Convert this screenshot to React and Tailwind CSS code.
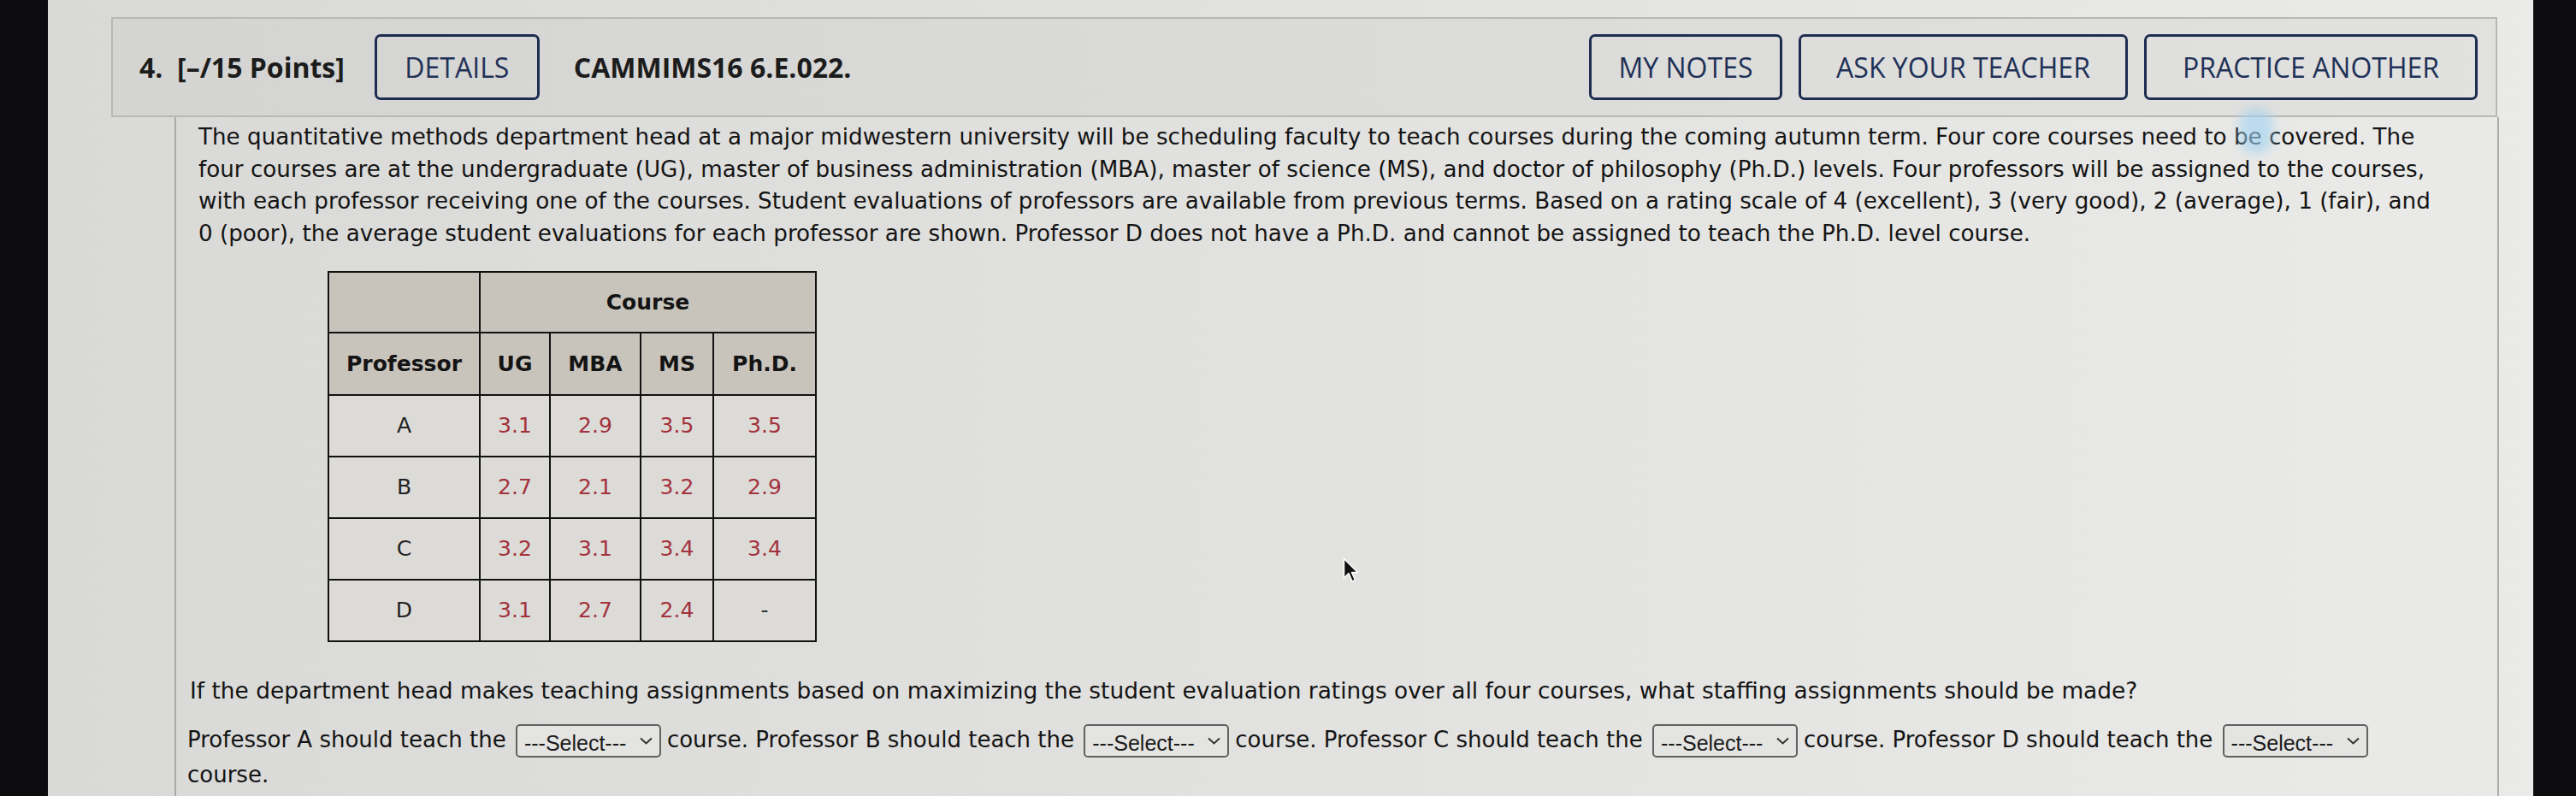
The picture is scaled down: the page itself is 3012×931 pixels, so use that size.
import React from "react";

const rows = [
  { prof: "A", vals: ["3.1", "2.9", "3.5", "3.5"] },
  { prof: "B", vals: ["2.7", "2.1", "3.2", "2.9"] },
  { prof: "C", vals: ["3.2", "3.1", "3.4", "3.4"] },
  { prof: "D", vals: ["3.1", "2.7", "2.4", "-"] },
];

function HeadButton({ label, width }) {
  return (
    <button
      className={`flex items-center justify-center h-[77px] ${width} border-[3px] border-[#1d2d4f] rounded-[7px] text-[32px] text-[#1f3157] font-['Open_Sans',sans-serif]`}
    >
      {label}
    </button>
  );
}

function Select() {
  return (
    <span className="relative inline-block align-middle ml-[3px] mr-[7px]">
      <select className="appearance-none block h-[39px] w-[170px] border-2 border-[#606060] rounded-[5px] bg-[#e4e4e2] pl-[8px] text-[25px] text-[#1a1a1a] font-['Liberation_Sans',Arial,sans-serif]">
        <option>---Select---</option>
      </select>
      <svg
        className="pointer-events-none absolute right-[9px] top-[14px]"
        width="17"
        height="11"
        viewBox="0 0 17 11"
      >
        <path d="M2 2.5l6.5 6 6.5-6" stroke="#333" strokeWidth="2" fill="none" />
      </svg>
    </span>
  );
}

export default function App() {
  return (
    <div className="relative flex w-[3012px] h-[931px] overflow-hidden bg-[#0c0c0e]">
      <div className="w-[56px] shrink-0" />

      <div className="flex flex-col w-[2906px] bg-linear-to-r from-[#d9d9d7] to-[#eaeae8]">
        {/* question header */}
        <div className="flex items-center justify-between mt-[20px] ml-[74px] w-[2790px] h-[117px] pl-[31px] pr-[21px] border-2 border-[#b8b8b6] bg-linear-to-r from-[#d4d4d2] to-[#e1e1df]">
          <div className="flex items-center">
            <span className="text-[32px] font-bold text-[#1c1c1c] font-['Open_Sans',sans-serif]">
              4.&nbsp; [–/15 Points]
            </span>
            <div className="ml-[35px]">
              <HeadButton label="DETAILS" width="w-[193px]" />
            </div>
            <span className="ml-[40px] text-[32px] font-bold text-[#1c1c1c] font-['Open_Sans',sans-serif]">
              CAMMIMS16 6.E.022.
            </span>
          </div>
          <div className="flex items-center gap-[19px]">
            <HeadButton label="MY NOTES" width="w-[226px]" />
            <HeadButton label="ASK YOUR TEACHER" width="w-[385px]" />
            <HeadButton label="PRACTICE ANOTHER" width="w-[390px]" />
          </div>
        </div>

        {/* question body */}
        <div className="flex-1 ml-[148px] w-[2718px] border-x-2 border-[#aaaaa8] pl-[26px] pt-[5px] text-[#141414] font-['DejaVu_Sans',Verdana,sans-serif]">
          <p className="text-[26.2px] leading-[37.5px] whitespace-nowrap">
            The quantitative methods department head at a major midwestern university will be scheduling faculty to teach courses during the coming autumn term. Four core courses need to be covered. The
            <br />
            four courses are at the undergraduate (UG), master of business administration (MBA), master of science (MS), and doctor of philosophy (Ph.D.) levels. Four professors will be assigned to the courses,
            <br />
            with each professor receiving one of the courses. Student evaluations of professors are available from previous terms. Based on a rating scale of 4 (excellent), 3 (very good), 2 (average), 1 (fair), and
            <br />
            0 (poor), the average student evaluations for each professor are shown. Professor D does not have a Ph.D. and cannot be assigned to teach the Ph.D. level course.
          </p>

          <table className="mt-[25px] ml-[151px] border-collapse border-2 border-[#111] text-[25px]">
            <thead>
              <tr className="h-[71px] bg-[#c8c4bc]">
                <th className="w-[177px] border-2 border-[#111]" />
                <th colSpan={4} className="border-2 border-[#111] font-bold">
                  Course
                </th>
              </tr>
              <tr className="h-[73px] bg-[#c8c4bc] font-bold">
                <th className="w-[177px] border-2 border-[#111]">Professor</th>
                <th className="w-[82px] border-2 border-[#111]">UG</th>
                <th className="w-[106px] border-2 border-[#111]">MBA</th>
                <th className="w-[85px] border-2 border-[#111]">MS</th>
                <th className="w-[120px] border-2 border-[#111]">Ph.D.</th>
              </tr>
            </thead>
            <tbody className="bg-[#dcdbd8]">
              {rows.map((r) => (
                <tr key={r.prof} className="h-[72px]">
                  <td className="border-2 border-[#111] text-center text-[#222]">{r.prof}</td>
                  {r.vals.map((v, i) => (
                    <td
                      key={i}
                      className={`border-2 border-[#111] text-center ${
                        v === "-" ? "text-[#333]" : "text-[#a3323c]"
                      }`}
                    >
                      {v}
                    </td>
                  ))}
                </tr>
              ))}
            </tbody>
          </table>

          <p className="mt-[38px] -ml-[10px] text-[26.4px] leading-[38px] whitespace-nowrap">
            If the department head makes teaching assignments based on maximizing the student evaluation ratings over all four courses, what staffing assignments should be made?
          </p>

          <p className="mt-[18px] -ml-[13px] text-[26px] leading-[40px] w-[2620px]">
            Professor A should teach the <Select />course. Professor B should teach the <Select />course. Professor C should teach the <Select />course. Professor D should teach the <Select />course.
          </p>
        </div>
      </div>

      <div className="flex-1" />

      {/* screen glare */}
      <div className="pointer-events-none absolute left-[2618px] top-[126px] w-[40px] h-[54px] rounded-full bg-[#9fd3f3] opacity-60 blur-[6px]" />

      {/* mouse pointer */}
      <svg
        className="pointer-events-none absolute left-[1570px] top-[652px]"
        width="20"
        height="32"
        viewBox="0 0 20 32"
      >
        <path
          d="M1.5 1.5 L1.5 24 L7 18.5 L11 28 L14.5 26.5 L10.5 17.5 L17.5 17.5 Z"
          fill="#111"
          stroke="#fff"
          strokeWidth="1.5"
          strokeLinejoin="round"
        />
      </svg>
    </div>
  );
}
